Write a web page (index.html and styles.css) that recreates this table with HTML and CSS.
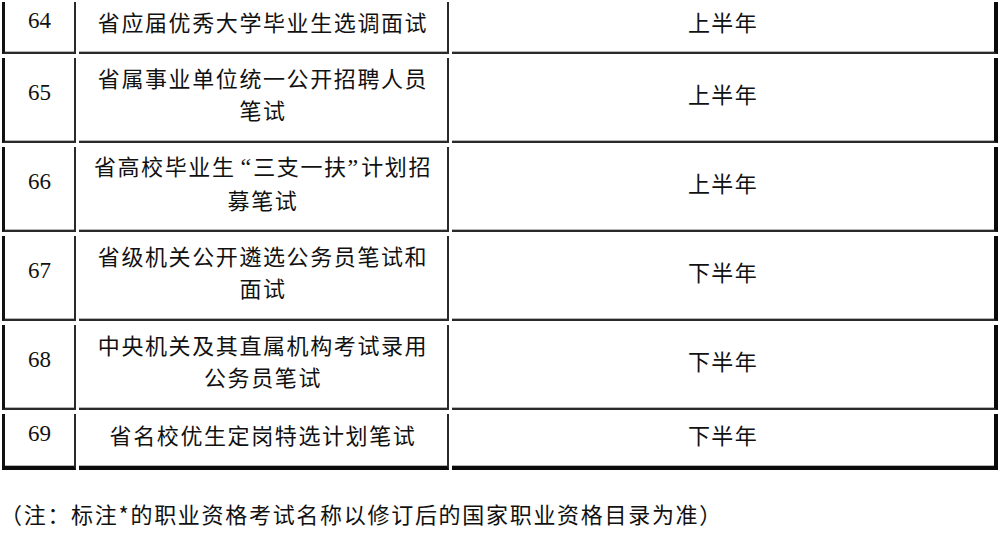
FILE: index.html
```html
<!DOCTYPE html>
<html lang="zh-CN">
<head>
<meta charset="utf-8">
<title>考试安排</title>
<link rel="stylesheet" href="styles.css">
</head>
<body>
<div class="page">
  <div class="table">
    <div class="row r-short">
      <div class="cell c1 num"><span>64</span></div>
      <div class="cell c2"><span>省应届优秀大学毕业生选调面试</span></div>
      <div class="cell c3"><span>上半年</span></div>
    </div>
    <div class="row r-tall">
      <div class="cell c1 num"><span>65</span></div>
      <div class="cell c2"><span>省属事业单位统一公开招聘人员<br>笔试</span></div>
      <div class="cell c3"><span>上半年</span></div>
    </div>
    <div class="row r-tall">
      <div class="cell c1 num"><span>66</span></div>
      <div class="cell c2"><span>省高校毕业生<span class="q ql">“</span>三支一扶<span class="q qr">”</span>计划招<br>募笔试</span></div>
      <div class="cell c3"><span>上半年</span></div>
    </div>
    <div class="row r-tall">
      <div class="cell c1 num"><span>67</span></div>
      <div class="cell c2"><span>省级机关公开遴选公务员笔试和<br>面试</span></div>
      <div class="cell c3"><span>下半年</span></div>
    </div>
    <div class="row r-tall">
      <div class="cell c1 num"><span>68</span></div>
      <div class="cell c2"><span>中央机关及其直属机构考试录用<br>公务员笔试</span></div>
      <div class="cell c3"><span>下半年</span></div>
    </div>
    <div class="row r-last">
      <div class="cell c1 num"><span>69</span></div>
      <div class="cell c2"><span>省名校优生定岗特选计划笔试</span></div>
      <div class="cell c3"><span>下半年</span></div>
    </div>
  </div>
  <p class="note">（注：标注*的职业资格考试名称以修订后的国家职业资格目录为准）</p>
</div>
</body>
</html>
```
FILE: styles.css
```css
html, body {
  margin: 0;
  padding: 0;
  background: #ffffff;
  overflow: hidden;
}

.page {
  width: 1000px;
  height: 540px;
  font-family: "Noto Sans CJK SC", "Liberation Serif", serif;
  color: #111111;
}

.table {
  display: flex;
  flex-direction: column;
  gap: 4px;
  padding: 2px 0 0 2px;
}

.row {
  display: grid;
  grid-template-columns: 74px 370px 546px;
  column-gap: 3px;
}

.r-short { height: 52px; }
.r-tall { height: 85px; }
.r-last { height: 56px; }

.cell {
  display: flex;
  align-items: center;
  justify-content: center;
  text-align: center;
  box-sizing: border-box;
  padding: 0 0 13px 0;
  font-size: 22px;
  line-height: 32px;
  letter-spacing: 1.6px;
  white-space: nowrap;
  border-bottom: 2px solid #2a2a2a;
  box-shadow: inset 0 -1px 0 #b5b5b5;
}

.c1 {
  border-left: 3px solid #111111;
  border-right: 2px solid #2a2a2a;
}

.c2 {
  border-right: 2px solid #2a2a2a;
}

.c3 {
  border-right: 4px solid #0a0a0a;
  letter-spacing: 1.3px;
}

.num {
  font-family: "Liberation Serif", "Times New Roman", serif;
  letter-spacing: 0;
  font-size: 23px;
}

.q {
  font-family: "Liberation Serif", "Times New Roman", serif;
  font-size: 24px;
  letter-spacing: 0;
}

.ql {
  margin-left: 5px;
  margin-right: 2px;
}

.qr {
  margin-left: 0;
  margin-right: 3px;
}

.r-last .cell {
  border-bottom: 4px solid #0a0a0a;
}

.note {
  margin: 27px 0 0 0;
  padding: 0;
  font-size: 22px;
  line-height: 32px;
  letter-spacing: 1.7px;
  white-space: nowrap;
}
```
